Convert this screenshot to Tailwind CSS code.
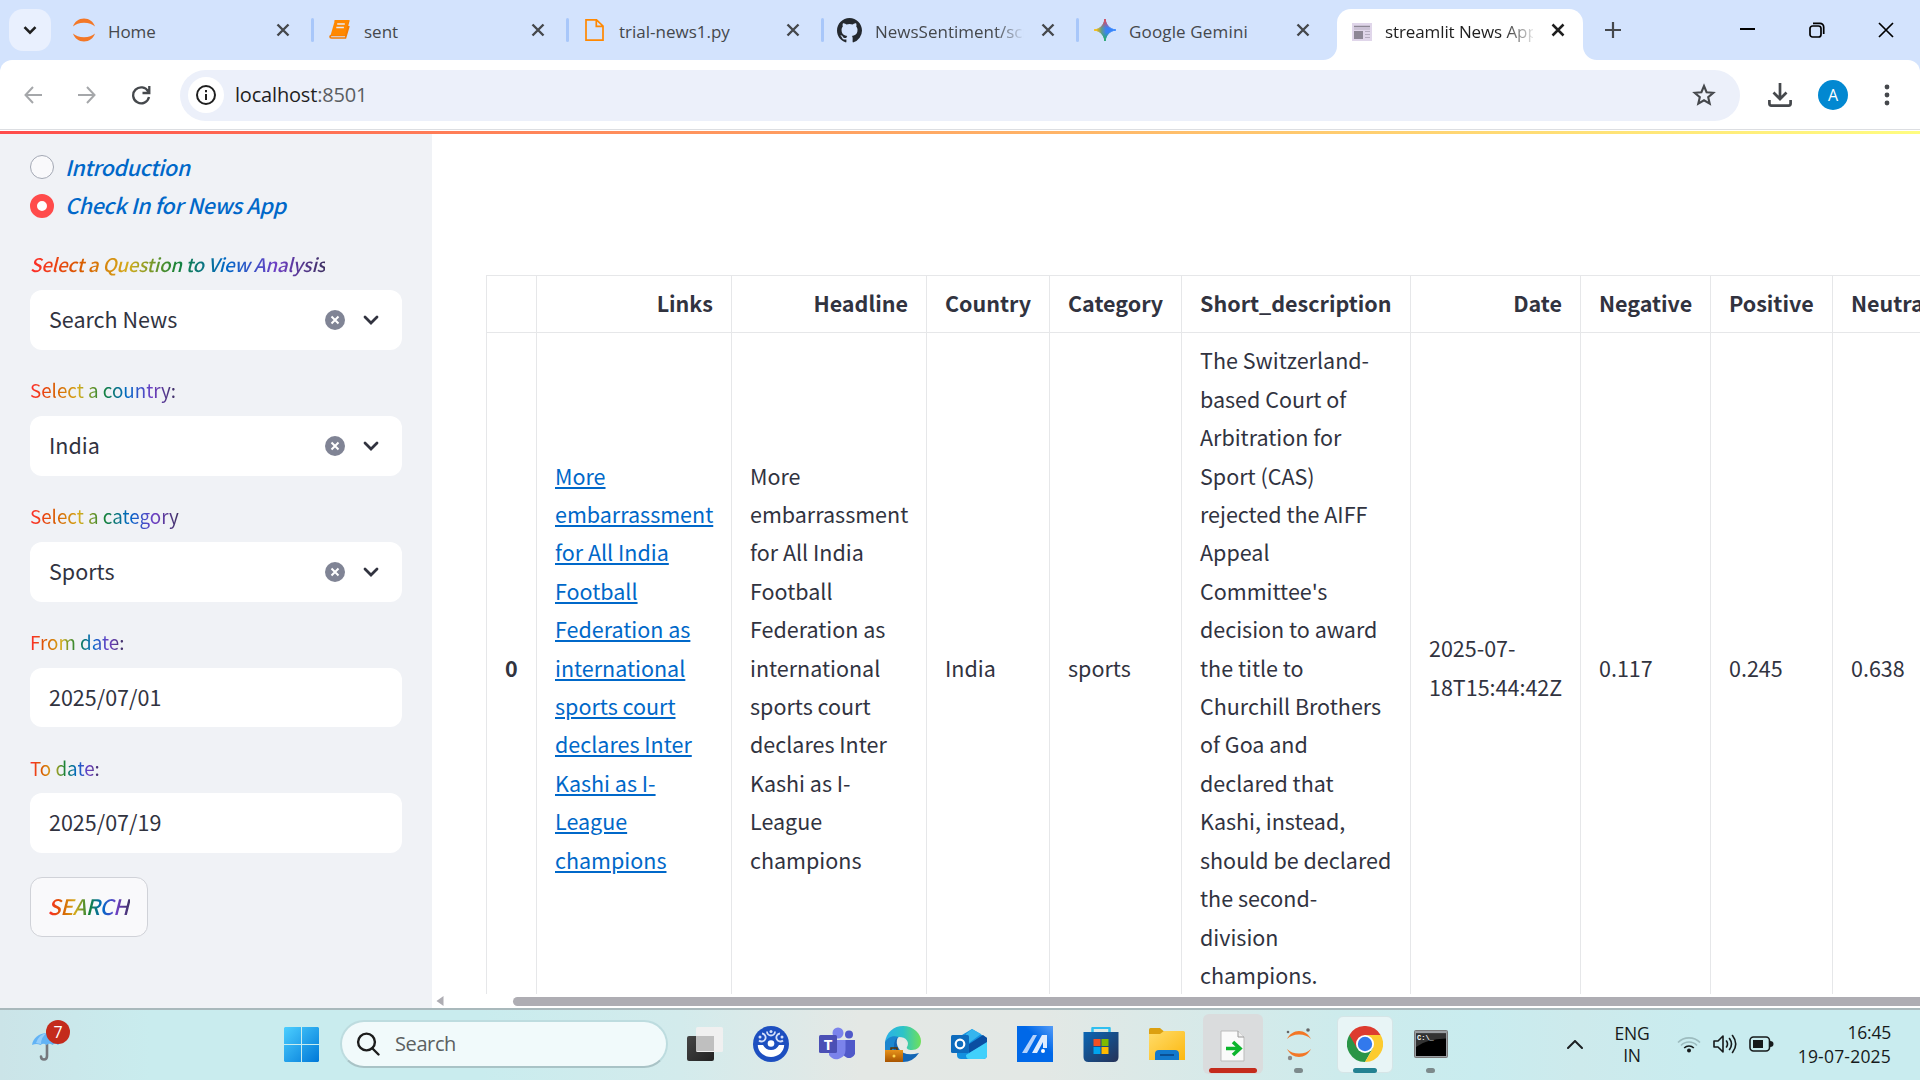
<!DOCTYPE html>
<html lang="en">
<head>
<meta charset="utf-8">
<title>streamlit News App</title>
<script src="https://cdn.jsdelivr.net/npm/@tailwindcss/browser@4"></script>
</head>
<body class="flex h-[1080px] w-[1920px] flex-col overflow-hidden bg-white font-['Open_Sans',sans-serif]">

<!-- Tab strip -->
<header class="flex h-[72px] shrink-0 bg-[#d3e3fd] pl-[9px] -mb-3">
  <button class="mt-[9px] mr-[6px] flex h-[42px] w-[42px] shrink-0 items-center justify-center rounded-[14px] bg-[#e9f0fe]">
    <svg width="14" height="9" viewBox="0 0 14 9" fill="none" stroke="#1f1f1f" stroke-width="2.6"><path d="M1.5 1.2 7 6.7l5.5-5.5"/></svg>
  </button>
  <div class="flex h-[60px] w-[255px] shrink-0 items-center pl-[15px]">
    <svg class="shrink-0" width="24" height="24" viewBox="0 0 24 24" fill="#f37726"><path d="M1 8.6C2.600 3.800 6.800.6 12 .6s9.400 3.200 11 8C20.500 6.200 16.700 4.800 12 4.800S3.500 6.200 1 8.600zM1 15.400c1.600 4.800 5.800 8 11 8s9.400-3.200 11-8c-2.500 2.400-6.300 3.800-11 3.800S3.500 17.800 1 15.400z"/></svg>
    <span class="ml-[12px] w-[160px] shrink-0 pt-[3px] text-[17px] tracking-[-0.1px] text-[#45484c]">Home</span>
    <svg class="ml-[8px] shrink-0" width="14" height="14" viewBox="0 0 14 14" stroke="#45484c" stroke-width="2.4"><path d="m1.500 1.500 11 11m0-11-11 11"/></svg>
    <i class="-mr-1 ml-[21px] h-6 w-[3px] shrink-0 rounded bg-[#a8c7fa]"></i>
  </div>
  <div class="flex h-[60px] w-[255px] shrink-0 items-center pl-[15px]">
    <svg class="shrink-0" width="24" height="24" viewBox="0 0 24 24"><path d="M7.500 3h14.200l-4 14.500H4.500q-1.500 0-1.500 1.200t1.500 1.300h14L22 8" fill="none" stroke="#f57c00" stroke-width="1.600"/><path d="M8 2h14l-4 15.500H3.500z" fill="#ff8800"/><path d="M10.200 6h7.600M9.300 9.400h7.600" stroke="#e6e9f5" stroke-width="1.500"/></svg>
    <span class="ml-[13px] w-[160px] shrink-0 pt-[3px] text-[17px] text-[#45484c]">sent</span>
    <svg class="ml-[7px] shrink-0" width="14" height="14" viewBox="0 0 14 14" stroke="#45484c" stroke-width="2.4"><path d="m1.500 1.500 11 11m0-11-11 11"/></svg>
    <i class="-mr-1 ml-[21px] h-6 w-[3px] shrink-0 rounded bg-[#a8c7fa]"></i>
  </div>
  <div class="flex h-[60px] w-[255px] shrink-0 items-center pl-[15px]">
    <svg class="shrink-0" width="24" height="24" viewBox="0 0 24 24" fill="none" stroke="#ff8800" stroke-width="1.700"><path d="M4 1.800h10.500L21 8v14.200H4zM14.300 2v6.300H21"/></svg>
    <span class="ml-[13px] w-[160px] shrink-0 pt-[3px] text-[17px] text-[#45484c]">trial-news1.py</span>
    <svg class="ml-[7px] shrink-0" width="14" height="14" viewBox="0 0 14 14" stroke="#45484c" stroke-width="2.4"><path d="m1.500 1.500 11 11m0-11-11 11"/></svg>
    <i class="-mr-1 ml-[21px] h-6 w-[3px] shrink-0 rounded bg-[#a8c7fa]"></i>
  </div>
  <div class="flex h-[60px] w-[255px] shrink-0 items-center pl-[15px]">
    <svg class="shrink-0" width="25" height="25" viewBox="0 0 16 16" fill="#24292f"><path d="M8 0C3.580 0 0 3.580 0 8c0 3.540 2.290 6.530 5.470 7.590.4.070.55-.17.55-.38 0-.19-.010-.82-.010-1.490-2.010.37-2.530-.49-2.690-.94-.09-.23-.48-.94-.82-1.130-.28-.15-.68-.52-.010-.53.63-.010 1.080.58 1.230.82.72 1.210 1.870.87 2.330.66.070-.52.28-.87.510-1.070-1.780-.2-3.640-.89-3.640-3.950 0-.87.310-1.590.82-2.150-.08-.2-.36-1.020.08-2.120 0 0 .67-.21 2.200.82a7.600 7.600 0 0 1 4 0c1.530-1.040 2.200-.82 2.200-.82.44 1.100.16 1.920.08 2.120.51.56.82 1.270.82 2.150 0 3.070-1.870 3.750-3.650 3.950.29.25.54.73.54 1.480 0 1.070-.010 1.930-.010 2.200 0 .21.15.46.55.38A8 8 0 0 0 16 8c0-4.420-3.580-8-8-8z"/></svg>
    <span class="ml-[13px] w-[149px] shrink-0 overflow-hidden pt-[3px] text-[17px] whitespace-nowrap text-[#45484c] [mask-image:linear-gradient(to_right,#000_120px,transparent_150px)]">NewsSentiment/scripts</span>
    <svg class="ml-[17px] shrink-0" width="14" height="14" viewBox="0 0 14 14" stroke="#45484c" stroke-width="2.4"><path d="m1.500 1.500 11 11m0-11-11 11"/></svg>
    <i class="-mr-1 ml-[21px] h-6 w-[3px] shrink-0 rounded bg-[#a8c7fa]"></i>
  </div>
  <div class="flex h-[60px] w-[255px] shrink-0 items-center pl-[16px]">
    <svg class="shrink-0" width="24" height="24" viewBox="0 0 24 24"><defs><linearGradient id="gm" x1="0" y1=".5" x2="1" y2=".5"><stop offset=".1" stop-color="#fbbc04"/><stop offset=".35" stop-color="#5f9a8f"/><stop offset=".55" stop-color="#3b82f6"/><stop offset="1" stop-color="#3186ff"/></linearGradient><linearGradient id="gr" x1="0" y1="0" x2="0" y2="1"><stop offset="0" stop-color="#f0434a"/><stop offset=".42" stop-color="#f0434a" stop-opacity="0"/><stop offset=".6" stop-color="#25b05b" stop-opacity="0"/><stop offset="1" stop-color="#25b05b"/></linearGradient></defs><path d="M12 1c1 6 4.500 10 11 11-6.500 1-10 5-11 11-1-6-4.500-10-11-11C7.500 11 11 7 12 1z" fill="url(#gm)" stroke="url(#gm)"/><path d="M12 1c1 6 4.500 10 11 11-6.500 1-10 5-11 11-1-6-4.500-10-11-11C7.500 11 11 7 12 1z" fill="url(#gr)" stroke="url(#gr)"/></svg>
    <span class="ml-[12px] w-[160px] shrink-0 pt-[3px] text-[17px] tracking-[0.15px] text-[#45484c]">Google Gemini</span>
    <svg class="ml-[7px] shrink-0" width="14" height="14" viewBox="0 0 14 14" stroke="#45484c" stroke-width="2.4"><path d="m1.500 1.500 11 11m0-11-11 11"/></svg>
  </div>
  <div class="relative mt-[9px] ml-[5px] flex h-[51px] w-[246px] shrink-0 items-center rounded-t-[14px] bg-white pb-[9px] pl-[14px]">
    <svg class="absolute bottom-0 -left-[14px]" width="14" height="14"><path d="M14 0v14H0A14 14 0 0 0 14 0z" fill="#fff"/></svg>
    <svg class="absolute -right-[14px] bottom-0" width="14" height="14"><path d="M0 0v14h14A14 14 0 0 1 0 0z" fill="#fff"/></svg>
    <svg class="mt-[3px] ml-px shrink-0" width="20" height="18" viewBox="0 0 20 18"><path d="M0 0h20v18H0z" fill="#e0d6ea"/><path d="M2 3.500h16" stroke="#8d8795" stroke-width="1.500"/><path d="M2 8h9v8H2z" fill="#8d8795"/><path d="M13 8.500h5m-5 3h5m-5 3h5M2 6h16" stroke="#b5adc0"/></svg>
    <span class="ml-[13px] w-[148px] shrink-0 overflow-hidden pt-[3px] text-[17px] tracking-[-0.1px] whitespace-nowrap text-[#1f1f1f] [mask-image:linear-gradient(to_right,#000_118px,transparent_152px)]">streamlit News App</span>
    <svg class="ml-[18px] shrink-0" width="14" height="14" viewBox="0 0 14 14" stroke="#1f1f1f" stroke-width="2.500"><path d="m1.500 1.500 11 11m0-11-11 11"/></svg>
  </div>
  <div class="flex h-[60px] flex-1 items-center pl-[22px]">
    <svg width="16" height="16" viewBox="0 0 16 16" stroke="#45484c" stroke-width="2.200"><path d="M8 0v16M0 8h16"/></svg>
    <svg class="ml-[119px]" width="15" height="16" viewBox="0 0 15 16" stroke="#000" stroke-width="2"><path d="M0 7h15"/></svg>
    <svg class="ml-[54px]" width="16" height="16" viewBox="0 0 16 16" fill="none" stroke="#000" stroke-width="1.700"><rect x="1" y="4" width="11" height="11" rx="2.500"/><path d="M4 1.300h7a3.700 3.700 0 0 1 3.700 3.700v7"/></svg>
    <svg class="ml-[53px]" width="16" height="16" viewBox="0 0 16 16" stroke="#000" stroke-width="1.700"><path d="m1 1 14 14m0-14L1 15"/></svg>
  </div>
</header>

<!-- Toolbar -->
<div class="z-10 flex h-[71px] shrink-0 items-center rounded-t-xl bg-white pb-px pl-[24px]">
  <svg width="18" height="18" viewBox="0 0 18 18" fill="none" stroke="#a5a7aa" stroke-width="2"><path d="M18 9H1.500M9 1 1.500 9 9 17"/></svg>
  <svg class="ml-[36px]" width="18" height="18" viewBox="0 0 18 18" fill="none" stroke="#a5a7aa" stroke-width="2"><path d="M0 9h16.500M9 1l7.500 8L9 17"/></svg>
  <svg class="ml-[35px]" width="20" height="20" viewBox="0 0 20 20" fill="none" stroke="#45484c" stroke-width="2.300"><path d="M18 12a8 8 0 1 1-.8-5.500L17.800 7.500M18.300 1v7H11.500"/></svg>
  <div class="ml-[29px] flex h-[51px] w-[1560px] items-center rounded-full bg-[#ecf0fa] pl-2">
    <span class="flex h-9 w-9 items-center justify-center rounded-full bg-white">
      <svg width="20" height="20" viewBox="0 0 20 20" fill="none" stroke="#1f1f1f" stroke-width="2"><circle cx="10" cy="10" r="9"/><path d="M10 9v6M10 5v2.200"/></svg>
    </span>
    <span class="ml-[11px] pb-px text-[20px] tracking-[-0.18px] text-[#1f1f1f]">localhost<span class="text-[#5a5d61]">:8501</span></span>
    <svg class="ml-auto mr-[24px]" width="24" height="24" viewBox="0 0 24 24" fill="none" stroke="#45484c" stroke-width="2.100"><path d="m12 3 2.600 6.200 6.700.6-5.100 4.400 1.500 6.500L12 17.300l-5.700 3.400 1.500-6.500L2.700 9.800l6.700-.6z"/></svg>
  </div>
  <svg class="ml-[28px]" width="24" height="24" viewBox="0 0 24 24" fill="none" stroke="#45484c" stroke-width="2.700"><path d="M12 0v15M5.500 9.500 12 16l6.500-6.500M1.400 17v3.600q0 2 2 2h17.200q2 0 2-2V17"/></svg>
  <span class="ml-[26px] flex h-[30px] w-[30px] items-center justify-center rounded-full bg-[#0288d1] text-[16px] text-white">A</span>
  <svg class="ml-[36px]" width="6" height="22" viewBox="0 0 6 22" fill="#45484c"><circle cx="3" cy="3" r="2.400"/><circle cx="3" cy="11" r="2.400"/><circle cx="3" cy="19" r="2.400"/></svg>
</div>
<div class="-mt-[2px] z-10 h-px shrink-0 bg-[#dcdee2]"></div>
<div class="mt-px h-[3px] shrink-0 bg-gradient-to-r from-[#ff4b4b] to-[#fffd80]"></div>

<!-- Page -->
<div class="flex h-[874px] shrink-0 font-['Noto_Sans_CJK_SC',sans-serif] text-[21.5px] text-[#31333f]">
  <aside class="w-[432px] shrink-0 bg-[#f0f2f6] pr-[30px] pl-[30px]">
    <div class="mt-[14px] flex h-[38px] items-center gap-[11px] font-medium tracking-[-0.4px] text-[#0068c9] italic">
      <span class="h-6 w-6 rounded-full border border-[#a3a8b4] bg-[#f9f9fb]"></span>Introduction
    </div>
    <div class="flex h-[39px] items-center gap-[11px] font-medium tracking-[-0.35px] text-[#0068c9] italic">
      <span class="h-6 w-6 rounded-full border-[7px] border-[#ff4b4b] bg-white"></span>Check In for News App
    </div>
    <div class="mt-[22px] h-[43px] text-[18.8px] leading-[34px] font-medium tracking-[-0.23px] italic"><span class="bg-[linear-gradient(to_right,#ff2b2b,#d95a00,#d4ac1c,#158237,#0068c9,#6f3fc4,#3f3163)] bg-clip-text text-transparent">Select a Question to View Analysis</span></div>
    <div class="flex h-[60px] items-center rounded-xl bg-white pl-[19px] pr-[23px]"><span class="pb-[2px]">Search News</span>
      <svg class="ml-auto" width="20" height="20" viewBox="0 0 20 20"><circle cx="10" cy="10" r="10" fill="#808495"/><path d="m6.500 6.500 7 7m0-7-7 7" stroke="#fff" stroke-width="2"/></svg>
      <svg class="ml-[18px]" width="16" height="10" viewBox="0 0 16 10" fill="none" stroke="#31333f" stroke-width="2.800" stroke-linecap="round"><path d="m2 2 6 6 6-6"/></svg>
    </div>
    <div class="mt-[23px] h-[43px] text-[18.8px] leading-[34px]"><span class="bg-[linear-gradient(to_right,#ff2b2b,#d95a00,#d4ac1c,#158237,#0068c9,#6f3fc4,#3f3163)] bg-clip-text text-transparent">Select a country:</span></div>
    <div class="flex h-[60px] items-center rounded-xl bg-white pl-[19px] pr-[23px]"><span class="pb-[2px]">India</span>
      <svg class="ml-auto" width="20" height="20" viewBox="0 0 20 20"><circle cx="10" cy="10" r="10" fill="#808495"/><path d="m6.500 6.500 7 7m0-7-7 7" stroke="#fff" stroke-width="2"/></svg>
      <svg class="ml-[18px]" width="16" height="10" viewBox="0 0 16 10" fill="none" stroke="#31333f" stroke-width="2.800" stroke-linecap="round"><path d="m2 2 6 6 6-6"/></svg>
    </div>
    <div class="mt-[23px] h-[43px] text-[18.8px] leading-[34px]"><span class="bg-[linear-gradient(to_right,#ff2b2b,#d95a00,#d4ac1c,#158237,#0068c9,#6f3fc4,#3f3163)] bg-clip-text text-transparent">Select a category</span></div>
    <div class="flex h-[60px] items-center rounded-xl bg-white pl-[19px] pr-[23px]"><span class="pb-[2px]">Sports</span>
      <svg class="ml-auto" width="20" height="20" viewBox="0 0 20 20"><circle cx="10" cy="10" r="10" fill="#808495"/><path d="m6.500 6.500 7 7m0-7-7 7" stroke="#fff" stroke-width="2"/></svg>
      <svg class="ml-[18px]" width="16" height="10" viewBox="0 0 16 10" fill="none" stroke="#31333f" stroke-width="2.800" stroke-linecap="round"><path d="m2 2 6 6 6-6"/></svg>
    </div>
    <div class="mt-[23px] h-[43px] text-[18.8px] leading-[34px]"><span class="bg-[linear-gradient(to_right,#ff2b2b,#d95a00,#d4ac1c,#158237,#0068c9,#6f3fc4,#3f3163)] bg-clip-text text-transparent">From date:</span></div>
    <div class="flex h-[59px] items-center rounded-xl bg-white pb-px pl-[19px]">2025/07/01</div>
    <div class="mt-[24px] h-[42px] text-[18.8px] leading-[34px]"><span class="bg-[linear-gradient(to_right,#ff2b2b,#d95a00,#d4ac1c,#158237,#0068c9,#6f3fc4,#3f3163)] bg-clip-text text-transparent">To date:</span></div>
    <div class="flex h-[60px] items-center rounded-xl bg-white pb-[2px] pl-[19px]">2025/07/19</div>
    <button class="mt-[24px] flex h-[60px] w-[118px] items-center justify-center rounded-xl border border-[#d0d2d8] bg-[#f9f9fb] pb-[2px] font-medium tracking-[-0.4px] italic"><span class="bg-[linear-gradient(to_right,#ff2b2b,#d95a00,#d4ac1c,#158237,#0068c9,#6f3fc4,#3f3163)] bg-clip-text pr-[2px] text-transparent">SEARCH</span></button>
  </aside>
  <main class="flex min-w-0 flex-1 flex-col bg-white">
    <div class="h-[860px] shrink-0 overflow-hidden pt-[141px] pl-[54px]">
      <table class="w-[1496px] table-fixed border-collapse text-left leading-[38.4px] whitespace-nowrap [&_td]:border [&_td]:border-[#e6e7e9] [&_td]:px-[18px] [&_td]:pt-[8px] [&_td]:pb-[10px] [&_th]:border [&_th]:border-[#e6e7e9] [&_th]:px-[18px] [&_th]:pt-[8px] [&_th]:pb-[10px] [&_th]:font-semibold">
        <colgroup><col class="w-[50px]"><col class="w-[195px]"><col class="w-[195px]"><col class="w-[123px]"><col class="w-[132px]"><col class="w-[229px]"><col class="w-[170px]"><col class="w-[130px]"><col class="w-[122px]"><col class="w-[150px]"></colgroup>
        <thead>
          <tr><th></th><th class="text-right">Links</th><th class="text-right">Headline</th><th>Country</th><th>Category</th><th>Short_description</th><th class="text-right">Date</th><th>Negative</th><th>Positive</th><th>Neutral</th></tr>
        </thead>
        <tbody>
          <tr>
            <th>0</th>
            <td><a class="text-[#0068c9] underline decoration-2 underline-offset-[2px]">More<br>embarrassment<br>for All India<br>Football<br>Federation as<br>international<br>sports court<br>declares Inter<br>Kashi as I-<br>League<br>champions</a></td>
            <td>More<br>embarrassment<br>for All India<br>Football<br>Federation as<br>international<br>sports court<br>declares Inter<br>Kashi as I-<br>League<br>champions</td>
            <td>India</td>
            <td>sports</td>
            <td>The Switzerland-<br>based Court of<br>Arbitration for<br>Sport (CAS)<br>rejected the AIFF<br>Appeal<br>Committee's<br>decision to award<br>the title to<br>Churchill Brothers<br>of Goa and<br>declared that<br>Kashi, instead,<br>should be declared<br>the second-<br>division<br>champions.</td>
            <td>2025-07-<br>18T15:44:42Z</td>
            <td>0.117</td>
            <td>0.245</td>
            <td>0.638</td>
          </tr>
        </tbody>
      </table>
    </div>
    <div class="flex h-[14px] items-center overflow-hidden bg-white pl-[4px]">
      <svg width="8" height="10" viewBox="0 0 8 10"><path d="M7.500 0v10L.5 5z" fill="#aeadb3"/></svg>
      <div class="ml-[69px] h-[9px] flex-1 rounded-l-full bg-[#aeadb3]"></div>
    </div>
  </main>
</div>

<!-- Taskbar -->
<footer class="flex h-[72px] shrink-0 items-center border-t-2 border-[#a9b9bc] bg-[linear-gradient(to_right,#cbe4e8_0px,#c9ecee_150px,#c9ecee_480px,#d3ebec_680px,#e4e8e5_860px,#e3e8e5_1040px,#cdebec_1340px,#c9ecef_1480px,#cdeaec_1580px,#c9ecef_1700px,#c9ecef_1920px)] pb-[2px]">
  <div class="relative ml-[28px] h-[48px] w-[44px]">
    <svg class="absolute top-[10px] left-[3px]" width="36" height="32" viewBox="0 0 36 32"><path d="M16 14v12q0 3.500-3 3.500T10 26.500" fill="none" stroke="#75777c" stroke-width="2.600" stroke-linecap="round"/><path d="M16 1v3" stroke="#666" stroke-width="2"/><path d="M1 15C2 8 8 3 16 3s15 5 17 10q-4-1-6 2-3-2.500-5.500 0-3-2.500-6 0-3-2.500-6 0-4-2-8.500 0z" fill="#62b3f5"/><path d="M10 14q0-7 6-11Q8 4 5 13z" fill="#93cdfb"/></svg>
    <span class="absolute top-0 left-[18px] flex h-6 w-6 items-center justify-center rounded-full bg-[#c42b1c] text-[16px] leading-none text-white">7</span>
  </div>
  <svg class="ml-[212px]" width="35" height="35" viewBox="0 0 35 35"><defs><linearGradient id="win" x1="0" y1="0" x2="1" y2="1"><stop offset="0" stop-color="#4ccfff"/><stop offset="1" stop-color="#0078d8"/></linearGradient></defs><path d="M1 0h16v17H0V1zM18 0h16l1 1v16H18zM0 18h17v17H1l-1-1zM18 18h17v16l-1 1H18z" fill="url(#win)"/></svg>
  <div class="ml-[21px] flex h-[48px] w-[328px] items-center rounded-full border-2 border-[#bddcdf] border-b-[#a9c3c6] bg-[#f1fafb] pl-[14px]">
    <svg width="24" height="24" viewBox="0 0 24 24" fill="none" stroke="#1c1c1c" stroke-width="2.400" stroke-linecap="round"><circle cx="10.500" cy="10" r="8.400"/><path d="m16.500 16.500 6 6"/></svg>
    <span class="ml-[15px] text-[20px] tracking-[-0.4px] text-[#5b6061]">Search</span>
  </div>
  <div class="ml-[4px] flex h-[70px] -mb-[2px] pb-[2px]">
    <span class="flex w-[66px] items-center justify-center">
      <svg width="36" height="36" viewBox="0 0 36 36"><defs><linearGradient id="tv" x1="0" y1="0" x2="1" y2="1"><stop offset="0" stop-color="#454545"/><stop offset="1" stop-color="#222"/></linearGradient></defs><rect y="10" width="27" height="25" rx="2" fill="url(#tv)"/><rect x="9" y="1" width="27" height="25" rx="1.500" fill="#f0f0f0"/><path d="M9 10h18v15H9z" fill="#bfbfbf"/></svg>
    </span>
    <span class="flex w-[66px] items-center justify-center">
      <svg width="36" height="36" viewBox="0 0 36 36" fill="none"><circle cx="18" cy="18" r="18" fill="#1d4fc0"/><circle cx="18" cy="17.500" r="3.300" fill="#fff"/><path d="M4.800 19H10c1.500 3 4.500 5 8 5s6.500-2 8-5h5.200C31 26 25 31 18 31S5 26 4.800 19z" fill="#fff"/><g stroke="#d5e0fa" stroke-width="1.800"><path d="M14 5.500a4 4 0 0 0 8 0M6 14.500a4 4 0 1 0 3-7M30 14.500a4 4 0 1 1-3-7"/></g><g fill="#d5e0fa"><circle cx="18" cy="5.500" r="1.500"/><circle cx="7" cy="11" r="1.500"/><circle cx="29" cy="11" r="1.500"/></g></svg>
    </span>
    <span class="flex w-[66px] items-center justify-center">
      <svg width="36" height="36" viewBox="0 0 36 36"><circle cx="30" cy="8.500" r="4" fill="#5059c9"/><path d="M24 14h12v9a6 6 0 0 1-12 5z" fill="#5059c9"/><circle cx="19" cy="7" r="5.500" fill="#7b83eb"/><path d="M10 14h16.500v10a9 9 0 0 1-16.500 5z" fill="#7b83eb"/><rect y="9" width="18" height="18" rx="1.500" fill="#4b50b5"/><text x="9" y="23.500" text-anchor="middle" font-family="Open Sans" font-weight="700" font-size="15" fill="#fff">T</text></svg>
    </span>
    <span class="flex w-[66px] items-center justify-center">
      <svg width="36" height="36" viewBox="0 0 36 36"><defs><linearGradient id="ed" x1="0" y1=".5" x2="1" y2=".5"><stop offset="0" stop-color="#2bb0e8"/><stop offset=".5" stop-color="#2cc3c8"/><stop offset="1" stop-color="#6fe05a"/></linearGradient><linearGradient id="br" x1="0" y1="0" x2="0" y2="1"><stop offset="0" stop-color="#e8931a"/><stop offset="1" stop-color="#a85400"/></linearGradient></defs><path d="M18 36C7 36 0 28 0 18 0 11 7 9 13 11q-3 6 1 12 6 8 20 4-6 9-16 9z" fill="#1466b5"/><path d="M0 17C1 6 9 0 18 0c11 0 18 8 18 15 0 6-4 9-9 9-4 0-6-1.500-5-3 3-5-1-10-8-10C7 11 2 13 0 17z" fill="url(#ed)"/><path d="M0 17C2 11 8 9 14 11q-5 2-5 9v4H0z" fill="#1c86cf"/><path d="M18 14q5 3 3 8c-1 2 5 4 12 3l-6 3q-9 0-12-5-1-5 3-9z" fill="#e6eae7"/><rect y="24" width="18" height="12" fill="url(#br)"/><path d="M6 24v-2h6v2" fill="none" stroke="#5b3200" stroke-width="1.500"/><circle cx="9" cy="30" r="1.500" fill="#ffd54a"/></svg>
    </span>
    <span class="flex w-[66px] items-center justify-center">
      <svg width="36" height="36" viewBox="0 0 36 36"><path d="M6 12 21 3l15 9v17q0 4-4 4H10q-4 0-4-4z" fill="#1490df"/><path d="m15 8 6-5 9 5-12 9z" fill="#35b5ee"/><path d="m18 18 14-9 4 3v5L18 27z" fill="#0a4ea2"/><path d="M15 29 36 16v13q0 4-4 4H18q-3 0-3-4z" fill="#41d0fb"/><rect y="9" width="18" height="18" rx="1.500" fill="#0f6cbd"/><circle cx="9" cy="18" r="4.300" fill="none" stroke="#fff" stroke-width="2.200"/></svg>
    </span>
    <span class="flex w-[66px] items-center justify-center">
      <svg width="36" height="36" viewBox="0 0 36 36"><defs><linearGradient id="as" x1="0" y1="1" x2="1" y2="0"><stop offset=".6" stop-color="#0068e8"/><stop offset="1" stop-color="#559cf8"/></linearGradient></defs><path d="M0 0h36v36H0z" fill="url(#as)"/><path d="m5 27 11-18h4L10 27z" fill="#b4d2fb"/><path d="m15 27 10-18h5v13h-4v-6l-6 11z" fill="#dfecfe"/><circle cx="26" cy="25" r="2" fill="#fff"/></svg>
    </span>
    <span class="flex w-[66px] items-center justify-center">
      <svg width="36" height="36" viewBox="0 0 36 36"><defs><linearGradient id="st" x1="0" y1="0" x2="1" y2="1"><stop offset="0" stop-color="#0a66b5"/><stop offset="1" stop-color="#263257"/></linearGradient></defs><path d="M9.500 8V2h17v6" fill="none" stroke="#30bff0" stroke-width="2"/><path d="M.5 6h35v25q0 5-5 5h-25q-5 0-5-5z" fill="url(#st)"/><path d="M9.500 6V2m17 4V2" stroke="#30bff0" stroke-width="2"/><path d="M10.500 13h7v7h-7z" fill="#f25022"/><path d="M18.500 13h7v7h-7z" fill="#7fba00"/><path d="M10.500 21h7v7h-7z" fill="#00a4ef"/><path d="M18.500 21h7v7h-7z" fill="#ffb900"/></svg>
    </span>
    <span class="flex w-[66px] items-center justify-center">
      <svg width="36" height="36" viewBox="0 0 36 36"><defs><linearGradient id="fx" x1="0" y1="0" x2="1" y2="1"><stop offset="0" stop-color="#ffdc6b"/><stop offset="1" stop-color="#fcb80f"/></linearGradient></defs><path d="M0 3.500Q0 2 1.500 2H11l4 3.500V9H0z" fill="#dca010"/><path d="M0 8h11l4-3h19.500Q36 5 36 6.500V34H0z" fill="url(#fx)"/><path d="M6 34v-6q0-4 4-4h16q4 0 4 4v6z" fill="#1279cd"/><path d="M11 29h14" stroke="#0a4f94" stroke-width="2"/></svg>
    </span>
    <span class="relative flex w-[66px] items-center justify-center">
      <i class="absolute inset-x-[3px] top-[4px] h-[60px] rounded-md bg-[#dadcdd]"></i>
      <i class="absolute top-[58px] left-[9px] h-[5px] w-[48px] rounded-full bg-[#c42b1c]"></i>
      <svg class="relative mt-[3px]" width="26" height="32" viewBox="0 0 26 32"><path d="M1 1h17l6 6v24H1z" fill="#fafafa" stroke="#bbb"/><path d="M18 1v6h6" fill="#eee" stroke="#999"/><path d="M6 18.500h12M13 12l7 6.500-7 6.500" fill="none" stroke="#0bb52c" stroke-width="3.600"/></svg>
    </span>
    <span class="relative flex w-[66px] items-center justify-center">
      <i class="absolute top-[58px] left-[28px] h-[5px] w-[9px] rounded-full bg-[#7d8a8c]"></i>
      <svg width="28" height="34" viewBox="0 0 28 34" fill="#f37726"><path d="M2 12C4.500 7 9 4 14 4s9.500 3 12 8C23 9 19 7.500 14 7.500S5 9 2 12zM2 22c2.500 5 7 8 12 8s9.500-3 12-8c-3 3-7 4.500-12 4.500S5 25 2 22z"/><circle cx="23" cy="3" r="1.800" fill="#666"/><circle cx="3" cy="5" r="1.300" fill="#666"/><circle cx="5" cy="31" r="2.200" fill="#8a8a8a"/></svg>
    </span>
    <span class="relative flex w-[66px] items-center justify-center">
      <i class="absolute inset-x-[5px] top-[6px] h-[57px] rounded-md border border-[#d5e5e7] bg-[#e8f5f6]"></i>
      <i class="absolute top-[58px] left-[21px] h-[5px] w-[24px] rounded-full bg-[#248292]"></i>
      <svg class="relative" width="36" height="36" viewBox="0 0 36 36"><path d="M2.400 9A18 18 0 0 0 18 36l8-14z" fill="#2a9547"/><path d="M18 9h15.600A18 18 0 0 1 18 36l7.800-13.500z" fill="#fccb2f"/><path d="M2.400 9A18 18 0 0 1 33.600 9H18l-7.800 13.500z" fill="#dd3b2f"/><circle cx="18" cy="18" r="9" fill="#fff"/><circle cx="18" cy="18" r="7.200" fill="#3279ec"/></svg>
    </span>
    <span class="relative flex w-[66px] items-center justify-center">
      <i class="absolute top-[58px] left-[28px] h-[5px] w-[9px] rounded-full bg-[#7d8a8c]"></i>
      <svg width="34" height="28" viewBox="0 0 34 28"><rect x=".5" y=".5" width="33" height="27" rx="1" fill="#9a9ea2" stroke="#777"/><path d="M2 3.500h30V26H2z" fill="#000"/><path d="M2 3.500h30v5Q12 9 2 17z" fill="#333"/><text x="3" y="10" font-family="Liberation Mono" font-weight="700" font-size="7" fill="#fff">C:\_</text></svg>
    </span>
  </div>
  <svg class="ml-[103px]" width="16" height="9" viewBox="0 0 16 9" fill="none" stroke="#1c2022" stroke-width="2" stroke-linecap="round"><path d="m1 8 7-7 7 7"/></svg>
  <div class="ml-[24px] w-[50px] text-center text-[17.500px] leading-[22.500px] tracking-[-0.2px] text-[#161a1b]">ENG<br>IN</div>
  <svg class="ml-[20px]" width="24" height="18" viewBox="0 0 24 18" fill="none" stroke-width="1.600"><path d="M1 7.500a15.500 15.500 0 0 1 22 0M4 10.500a11 11 0 0 1 16 0" stroke="#9dbcbf"/><path d="M7.200 13a6.800 6.800 0 0 1 9.600 0" stroke="#161a1b"/><circle cx="12" cy="15.500" r="2" fill="#161a1b"/></svg>
  <svg class="ml-[12px]" width="25" height="20" viewBox="0 0 25 20" fill="none" stroke="#161a1b" stroke-width="1.600" stroke-linejoin="round" stroke-linecap="round"><path d="M1 7h4l5-5v16l-5-5H1zM13.500 7q2 3 0 6M16.500 4.500q4 5.500 0 11M19.500 1.500q6.500 8.500 0 17"/></svg>
  <svg class="ml-[11px]" width="25" height="16" viewBox="0 0 25 16"><rect x="1" y="1" width="19.500" height="14" rx="3.500" fill="none" stroke="#161a1b" stroke-width="1.600"/><rect x="4" y="4" width="10" height="8" fill="#161a1b"/><path d="M21 5q3.500 0 3.500 3T21 11z" fill="#161a1b"/></svg>
  <div class="mr-[29px] ml-auto text-right text-[17.500px] leading-[24px] text-[#161a1b]"><span class="tracking-[-0.2px]">16:45</span><br><span class="tracking-[0.2px]">19-07-2025</span></div>
</footer>
</body>
</html>
